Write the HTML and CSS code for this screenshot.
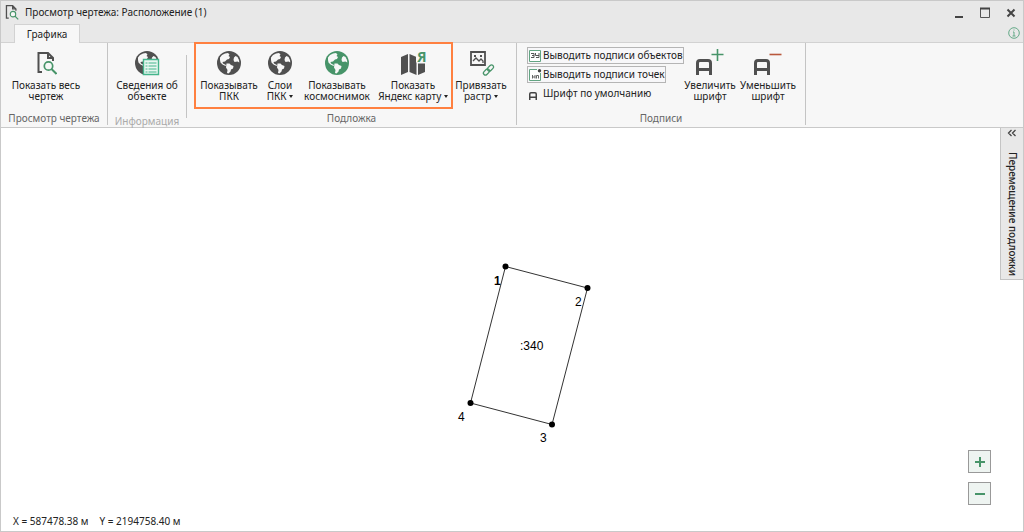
FILE: index.html
```html
<!DOCTYPE html>
<html lang="ru">
<head>
<meta charset="utf-8">
<title>Просмотр чертежа: Расположение (1)</title>
<link rel="stylesheet" href="styles.css">
</head>
<body>
<svg class="defs" aria-hidden="true">
  <symbol id="globe" viewBox="0 0 24 24">
    <circle cx="12" cy="12" r="12" fill="currentColor"/>
    <path fill="#f7f7f7" d="M3 6.500 5 4 8 2.500 11 2 12.500 3.500 11.500 5l1.500 1-1 2-2 .500-2 2-2.500.500.500 1.500 3 1.500-.500 1-3-1.500L3.500 11.500 3 9z"/>
    <path fill="#f7f7f7" d="M9.500 12.500h3L14 14l2.500 1-.500 2.500-2 1-.500 2-2 2-1.500-.500.500-3L9 16.500z"/>
    <path fill="#f7f7f7" d="M17 6.500 18.500 5 20.500 6l1.500 3 .300 2.500-1.800-1-3 .500-1-2z"/>
  </symbol>
  <symbol id="doc-search" viewBox="0 0 20 23">
    <path d="M5 20H1.500V1H11l5 5v3M11 1v5h5" fill="none" stroke="#505050" stroke-width="2"/>
    <circle cx="11.500" cy="14" r="4.200" fill="#f7f7f7" stroke="#479469" stroke-width="1.700"/>
    <path d="m14.500 17 5 5" stroke="#479469" stroke-width="2"/>
  </symbol>
  <symbol id="letter" viewBox="0 0 16 16">
    <path d="M1.500 16V4q0-2.500 2.500-2.500h8q2.500 0 2.500 2.500v12M1.500 10.500h13" fill="none" stroke="currentColor" stroke-width="3"/>
  </symbol>
</svg>
<div class="window">
  <header class="titlebar">
    <svg class="title-icon"><use href="#doc-search"/></svg>
    <h1 class="title">Просмотр чертежа: Расположение (1)</h1>
    <div class="window-controls">
      <button class="window-btn" aria-label="Свернуть"><svg viewBox="0 0 12 12"><path d="M2 10h8" stroke="#444" stroke-width="2"/></svg></button>
      <button class="window-btn" aria-label="Развернуть"><svg viewBox="0 0 12 12"><path d="M1.500 1v9.500h9V1" fill="none" stroke="#555"/><path d="M1 1.500h10" stroke="#444" stroke-width="2"/></svg></button>
      <button class="window-btn" aria-label="Закрыть"><svg viewBox="0 0 12 12"><path d="m2.500 2.500 7 7m0-7-7 7" stroke="#444" stroke-width="2"/></svg></button>
    </div>
  </header>
  <nav class="tabs">
    <button class="tab">Графика</button>
    <button class="info-btn" aria-label="Справка"><svg viewBox="0 0 12 12"><circle cx="6" cy="6" r="5.300" fill="none" stroke="#65aa88"/><path d="M5 5h1v4M4.500 9h3M5.500 3h1" fill="none" stroke="#65aa88"/></svg></button>
  </nav>
  <div class="ribbon">
    <section class="group group-view">
      <div class="group-body">
        <button class="tool"><svg class="tool-icon" viewBox="0 0 24 24"><use href="#doc-search" x="3" y="1" width="20" height="23"/></svg><span>Показать весь<br>чертеж</span></button>
      </div>
      <h2 class="caption">Просмотр чертежа</h2>
    </section>
    <section class="group group-info">
      <div class="group-body">
        <button class="tool"><svg class="tool-icon" viewBox="0 0 24 24"><use href="#globe" width="24" height="24"/><path d="M8.500 8.500h15v15h-15z" fill="#e9f7f1" stroke="#45b58c" stroke-width="1.400"/><path d="M10.500 12h2m1 0h8m-11 3h2m1 0h8m-11 3h2m1 0h8m-11 3h2m1 0h8" stroke="#45b58c"/></svg><span>Сведения об<br>объекте</span></button>
      </div>
      <h2 class="caption caption-muted">Информация</h2>
    </section>
    <section class="group group-base">
      <div class="group-body">
        <div class="highlight">
          <button class="tool tool-pkk"><svg class="tool-icon"><use href="#globe"/></svg><span>Показывать<br>ПКК</span></button>
          <button class="tool tool-layers"><svg class="tool-icon"><use href="#globe"/></svg><span>Слои<br>ПКК <i class="arrow"></i></span></button>
          <button class="tool tool-wide"><svg class="tool-icon green"><use href="#globe"/></svg><span>Показывать<br>космоснимок</span></button>
          <button class="tool tool-wide"><svg class="tool-icon" viewBox="0 0 24 24"><path fill="#505050" d="M0 6 7 3v18l-7 3zM8.500 3l7 3v18l-7-3zM17 12.500h7V21l-7 3z"/><path d="M15 0h9v11.500h-9z" fill="#f7f7f7"/><text class="ya" x="16" y="11">Я</text></svg><span>Показать<br>Яндекс карту <i class="arrow"></i></span></button>
        </div>
        <button class="tool tool-raster"><svg class="tool-icon" viewBox="0 0 24 24"><path d="M2 1h14v13H2z" fill="none" stroke="#505050" stroke-width="1.800"/><path d="m4 10 3-3 3 3 2-2 2 2v2" fill="none" stroke="#505050" stroke-width="1.300"/><path d="M5 4h2v2H5zM11 4h2v2h-2z" fill="#505050"/><g fill="none" stroke="#479469" stroke-width="1.300"><rect x="18" y="15" width="7" height="4" rx="2" transform="rotate(-45 21.500 17)"/><rect x="14" y="19" width="7" height="4" rx="2" transform="rotate(-45 17.500 21)"/></g></svg><span>Привязать<br>растр <i class="arrow"></i></span></button>
      </div>
      <h2 class="caption">Подложка</h2>
    </section>
    <section class="group group-labels">
      <div class="group-body">
        <div class="toggles">
          <button class="toggle" aria-pressed="true"><svg viewBox="0 0 12 12"><path d="M.5.500h11v11H.500z" fill="#fff" stroke="#62a482"/><path d="M2 3.500h3v4H2m1-2h2M6.500 3v2.500H10M10 3v4.500H7" fill="none" stroke="#555"/></svg>Выводить подписи объектов</button>
          <button class="toggle" aria-pressed="true"><svg viewBox="0 0 12 12"><path d="M8 .500H.500v11h11V4" fill="#fff" stroke="#62a482"/><circle cx="10.500" cy="1.700" r="1.700" fill="#444"/><path d="M3.500 6v3.500M6 6v3.500M3.500 8H6M7.500 9.500v-3h2v3" fill="none" stroke="#666"/></svg>Выводить подписи точек</button>
          <button class="toggle toggle-plain"><svg viewBox="0 0 12 12"><use href="#letter" x="0" y="4" width="8" height="8"/></svg>Шрифт по умолчанию</button>
        </div>
        <button class="tool tool-size"><svg class="tool-icon tool-icon-font" viewBox="0 0 28 26"><use href="#letter" y="10" width="16" height="16"/><path d="M15.500 5.500h12M21.500 0v12" stroke="#479469" stroke-width="1.600"/></svg><span>Увеличить<br>шрифт</span></button>
        <button class="tool tool-size"><svg class="tool-icon tool-icon-font" viewBox="0 0 28 26"><use href="#letter" y="10" width="16" height="16"/><path d="M15.500 5.500h12" stroke="#b9583c" stroke-width="1.600"/></svg><span>Уменьшить<br>шрифт</span></button>
      </div>
      <h2 class="caption">Подписи</h2>
    </section>
  </div>
  <main class="canvas">
    <svg class="plot" viewBox="450 250 160 200" font-size="12">
      <path d="M505.500 266.500 587.500 288 552 424.500 470.500 403z" fill="none" stroke="#333"/>
      <circle cx="505.500" cy="266.500" r="3"/><circle cx="587.500" cy="288" r="3"/><circle cx="552" cy="424.500" r="3"/><circle cx="470.500" cy="403" r="3"/>
      <text x="494" y="285" class="bold">1</text><text x="575" y="306">2</text><text x="540" y="442">3</text><text x="458" y="421">4</text><text x="520" y="350">:340</text>
    </svg>
    <aside class="side-panel">
      <button class="side-btn" aria-label="Раскрыть панель"><svg viewBox="0 0 10 8"><path d="M4.500 1 1.500 4l3 3M8.500 1l-3 3 3 3" fill="none" stroke="#444" stroke-width="1.300"/></svg></button>
      <span class="side-title">Перемещение подложки</span>
    </aside>
    <div class="zoom">
      <button class="zoom-btn" aria-label="Увеличить"><svg viewBox="0 0 10 10"><path d="M0 5h10M5 0v10" stroke="#479469" stroke-width="2"/></svg></button>
      <button class="zoom-btn" aria-label="Уменьшить"><svg viewBox="0 0 10 10"><path d="M0 5h10" stroke="#479469" stroke-width="2"/></svg></button>
    </div>
    <footer class="coords"><span>X = 587478.38 м</span><span>Y = 2194758.40 м</span></footer>
  </main>
</div>
</body>
</html>
```
FILE: styles.css
```css
* { box-sizing: border-box; }
body { margin: 0; font: 10px/11px "Noto Sans", "Open Sans", sans-serif; color: #222; background: #fff; }
button { margin: 0; padding: 0; border: 0; background: none; font: inherit; color: inherit; }
svg { display: block; flex: none; overflow: visible; }
h1, h2 { margin: 0; font-weight: 400; }
.defs { position: absolute; width: 0; height: 0; }
.window { min-height: 100vh; display: flex; flex-direction: column; border: 1px solid #c9c9c9; }
.titlebar { display: flex; align-items: center; height: 23px; padding: 0 6px 0 4px; gap: 6px; background: #e8e8e8; }
.title-icon { width: 14px; height: 15px; }
.title { flex: 1; font-size: 10px; }
.window-controls { display: flex; gap: 14px; }
.window-btn, .window-btn svg { width: 12px; height: 12px; }
.tabs { display: flex; justify-content: space-between; padding: 0 3px 0 13px; background: #e8e8e8; border-bottom: 1px solid #d2d2d2; }
.tab { width: 66px; height: 19px; margin-bottom: -1px; background: #f7f7f7; border: 1px solid #d2d2d2; border-bottom: 0; }
.info-btn { align-self: center; }
.info-btn svg { width: 12px; height: 12px; }

.ribbon { display: flex; height: 85px; padding-bottom: 2px; background: #f7f7f7; border-bottom: 1px solid #c9c9c9; }
.group { display: flex; flex-direction: column; justify-content: space-between; border-right: 1px solid #c4c4c4; }
.group-body { display: flex; justify-content: center; }
.caption { font-size: 10px; line-height: 14px; text-align: center; color: #666; }
.caption-muted { margin-bottom: -10px; color: #aaa; }
.group-view { width: 107px; }
.group-view .group-body { padding-right: 16px; }
.group-info { width: 79px; margin: 12px 0 7px; }
.group-info .group-body { margin-top: -12px; }
.group-base { width: 330px; }
.group-base .group-body { justify-content: flex-start; padding-left: 7px; }
.group-labels { width: 289px; }
.group-labels .group-body { justify-content: flex-start; padding-left: 10px; }
.tool { display: flex; flex-direction: column; align-items: center; align-self: flex-start; gap: 5px; padding-top: 8px; white-space: nowrap; }
.tool-icon { width: 24px; height: 24px; color: #505050; }
.tool-icon-font { width: 28px; height: 26px; margin-top: -2px; }
.ya { font-size: 14px; font-weight: 700; fill: #479469; }
.green { color: #479469; }
.highlight { display: flex; height: 67px; margin-top: -1px; padding-left: 1px; border: 2px solid #ff8040; }
.highlight .tool { padding-top: 7px; }
.tool-pkk { width: 64px; }
.tool-layers { width: 38px; }
.tool-wide { width: 76px; }
.tool-raster { width: 56px; }
.tool-size { width: 58px; }
.arrow { display: inline-block; border: 2px solid transparent; border-top: 3px solid #222; border-bottom: 0; vertical-align: 2px; }
.toggles { display: flex; flex-direction: column; align-items: flex-start; gap: 2px; width: 154px; padding-top: 4px; }
.toggle { display: flex; align-items: center; gap: 2px; height: 17px; padding: 0 0 0 1px; border: 1px solid #b5b5b5; background: #f7f7f9; white-space: nowrap; }
.toggle svg { width: 12px; height: 12px; color: #444; }
.toggle-plain { border-color: transparent; background: none; }

.canvas { position: relative; flex: 1; display: flex; flex-direction: column; justify-content: space-between; align-items: flex-end; background: #fff; }
.plot { position: absolute; left: 449px; top: 122px; width: 160px; height: 200px; font-family: "Liberation Sans", Arial, sans-serif; }
.bold { font-weight: 700; }
.side-panel { display: flex; flex-direction: column; align-items: center; gap: 15px; width: 23px; height: 152px; background: #e8e8e8; border: 1px solid #c4c4c4; border-width: 0 0 1px 1px; }
.side-btn svg { width: 10px; height: 8px; margin-top: 1px; }
.side-title { writing-mode: vertical-rl; font-weight: 500; white-space: nowrap; }
.zoom { position: absolute; right: 32px; bottom: 26px; display: grid; gap: 9px; }
.zoom-btn { display: grid; place-items: center; width: 23px; height: 23px; background: #eef4f1; border: 1px solid #999; }
.zoom-btn svg { width: 10px; height: 10px; }
.coords { align-self: flex-start; display: flex; gap: 11px; padding: 0 0 4px 12px; }
```
